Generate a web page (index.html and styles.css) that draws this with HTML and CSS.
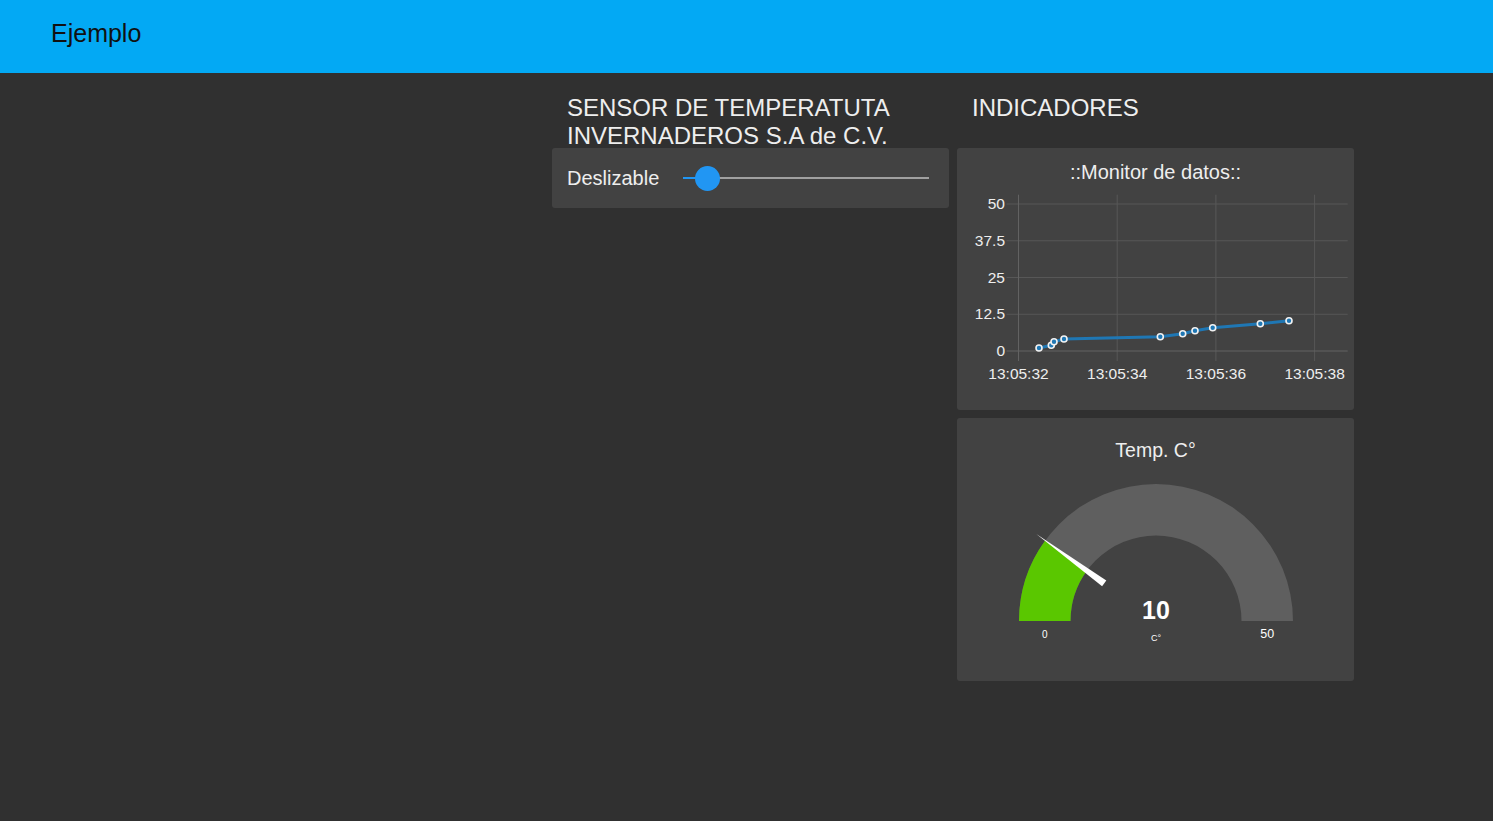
FILE: index.html
```html
<!DOCTYPE html>
<html lang="es">
<head>
<meta charset="utf-8">
<title>Ejemplo</title>
<link rel="stylesheet" href="styles.css">
</head>
<body>
<header class="toolbar">
  <span class="toolbar-title">Ejemplo</span>
</header>
<main class="page">
  <section class="group">
    <div class="group-title">SENSOR DE TEMPERATUTA INVERNADEROS S.A de C.V.</div>
    <div class="cards">
      <div class="card slider-card">
        <span class="slider-label">Deslizable</span>
        <div class="slider">
          <div class="slider-fill"></div>
          <div class="slider-thumb"></div>
        </div>
      </div>
    </div>
  </section>
  <section class="group">
    <div class="group-title">INDICADORES</div>
    <div class="cards">
      <div class="card chart-card">
        <svg class="chart" width="397" height="262" viewBox="0 0 397 262">
          <text class="chart-title" x="198.5" y="31" text-anchor="middle">::Monitor de datos::</text>
          <g class="grid">
            <line x1="49.5" y1="56" x2="390.7" y2="56"/>
            <line x1="49.5" y1="92.75" x2="390.7" y2="92.75"/>
            <line x1="49.5" y1="129.5" x2="390.7" y2="129.5"/>
            <line x1="49.5" y1="166.25" x2="390.7" y2="166.25"/>
            <line x1="160.2" y1="46.7" x2="160.2" y2="213"/>
            <line x1="258.9" y1="46.7" x2="258.9" y2="213"/>
            <line x1="357.6" y1="46.7" x2="357.6" y2="213"/>
          </g>
          <g class="axis">
            <line x1="61.5" y1="46.7" x2="61.5" y2="213"/>
            <line x1="49.5" y1="203" x2="390.7" y2="203"/>
          </g>
          <g class="tick-labels">
            <text x="48" y="61" text-anchor="end">50</text>
            <text x="48" y="97.75" text-anchor="end">37.5</text>
            <text x="48" y="134.5" text-anchor="end">25</text>
            <text x="48" y="171.25" text-anchor="end">12.5</text>
            <text x="48" y="208" text-anchor="end">0</text>
            <text x="61.5" y="231" text-anchor="middle">13:05:32</text>
            <text x="160.2" y="231" text-anchor="middle">13:05:34</text>
            <text x="258.9" y="231" text-anchor="middle">13:05:36</text>
            <text x="357.6" y="231" text-anchor="middle">13:05:38</text>
          </g>
          <polyline class="series" points="82,200 94.3,197.3 97,193.7 107,191 203.3,188.7 225.7,185.7 238,182.7 255.7,179.7 303.3,175.7 332,172.7"/>
          <g class="points">
            <circle cx="82" cy="200" r="3"/>
            <circle cx="94.3" cy="197.3" r="3"/>
            <circle cx="97" cy="193.7" r="3"/>
            <circle cx="107" cy="191" r="3"/>
            <circle cx="203.3" cy="188.7" r="3"/>
            <circle cx="225.7" cy="185.7" r="3"/>
            <circle cx="238" cy="182.7" r="3"/>
            <circle cx="255.7" cy="179.7" r="3"/>
            <circle cx="303.3" cy="175.7" r="3"/>
            <circle cx="332" cy="172.7" r="3"/>
          </g>
        </svg>
      </div>
      <div class="card gauge-card">
        <svg class="gauge" width="397" height="263" viewBox="0 0 397 263">
          <text class="gauge-title" x="198.5" y="38.5" text-anchor="middle">Temp. C°</text>
          <path class="gauge-bg" d="M62 203 A137 137 0 0 1 336 203 L284.5 203 A85.5 85.5 0 0 0 113.5 203 Z"/>
          <path class="gauge-val" d="M62 203 A137 137 0 0 1 88.17 122.47 L129.83 152.74 A85.5 85.5 0 0 0 113.5 203 Z"/>
          <polygon class="gauge-needle" points="79.3,116 149.3,162.6 145.1,168.2"/>
          <text class="gauge-value" x="199" y="200.7" text-anchor="middle">10</text>
          <text class="gauge-unit" x="199" y="223" text-anchor="middle">C°</text>
          <text class="gauge-min" x="87.75" y="220" text-anchor="middle">0</text>
          <text class="gauge-max" x="310.25" y="220" text-anchor="middle">50</text>
        </svg>
      </div>
    </div>
  </section>
</main>
</body>
</html>
```

FILE: styles.css
```css
html, body {
  margin: 0;
  padding: 0;
}

body {
  background: #303030;
  font-family: "Liberation Sans", Arial, sans-serif;
  color: #eeeeee;
  min-height: 821px;
}

.toolbar {
  box-sizing: border-box;
  height: 73px;
  background: #03a9f4;
  padding: 19px 0 0 51px;
}

.toolbar-title {
  font-size: 25px;
  line-height: 28px;
  color: #111111;
}

.page {
  display: flex;
  gap: 8px;
  padding: 21px 0 0 552px;
}

.group {
  width: 397px;
}

.group-title {
  box-sizing: border-box;
  height: 54px;
  padding-left: 15px;
  font-size: 24px;
  line-height: 28px;
  color: #eeeeee;
}

.cards {
  display: flex;
  flex-direction: column;
  gap: 8px;
}

.card {
  background: #424242;
  border-radius: 3px;
}

.slider-card {
  box-sizing: border-box;
  height: 60px;
  display: flex;
  align-items: center;
  padding: 0 20px 0 15px;
}

.slider-label {
  font-size: 20px;
  line-height: 24px;
  color: #eeeeee;
  margin-right: 24px;
}

.slider {
  position: relative;
  flex: 1;
  height: 2px;
  background: #a0a0a0;
}

.slider-fill {
  width: 24px;
  height: 2px;
  background: #2196f3;
}

.slider-thumb {
  position: absolute;
  left: 12px;
  top: -11.5px;
  width: 25px;
  height: 25px;
  border-radius: 50%;
  background: #2196f3;
}

.chart, .gauge {
  display: block;
}

.chart-title {
  font-size: 20px;
  fill: #eeeeee;
}

.grid line {
  stroke: #575757;
  stroke-width: 1;
}

.axis line {
  stroke: #626262;
  stroke-width: 1;
}

.tick-labels text {
  font-size: 15.5px;
  fill: #eeeeee;
}

.series {
  fill: none;
  stroke: #1f77b4;
  stroke-width: 3;
  stroke-linejoin: round;
}

.points circle {
  fill: #1f77b4;
  stroke: #f2f2f2;
  stroke-width: 1.6;
}

.gauge-title {
  font-size: 19.5px;
  fill: #eeeeee;
}

.gauge-bg {
  fill: #5f5f5f;
}

.gauge-val {
  fill: #5ac700;
}

.gauge-needle {
  fill: #ffffff;
}

.gauge-value {
  font-size: 25px;
  font-weight: bold;
  fill: #ffffff;
}

.gauge-unit {
  font-size: 9px;
  fill: #ffffff;
}

.gauge-min {
  font-size: 10px;
  fill: #ffffff;
}

.gauge-max {
  font-size: 12.5px;
  fill: #ffffff;
}
```
